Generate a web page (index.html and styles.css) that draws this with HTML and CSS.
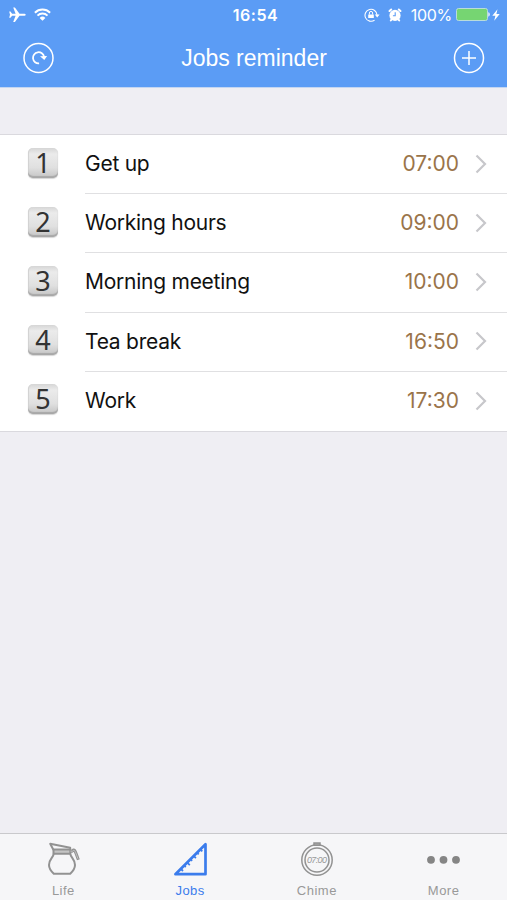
FILE: index.html
```html
<!DOCTYPE html>
<html lang="en">

<head>
    <meta charset="UTF-8">
    <meta name="viewport" content="width=device-width, initial-scale=1.0">
    <title>Jobs reminder</title>
    <link rel="stylesheet" href="styles.css">
</head>

<body>
    <header class="header">
        <div class="status-bar">
            <div class="status-left">
                <svg class="plane" width="17" height="16" viewBox="0 0 17 16">
                    <path fill="#fff" d="M16.7 7.7c0 .7-.8 1-1.7 1h-4.5L5.9 15H4.2l2.4-6.3H3.1L1.5 10.8H.2L1 7.7.2 4.6h1.3l1.6 2.1h3.5L4.2.6h1.7l4.6 6.1H15c.9 0 1.7.3 1.7 1z"/>
                </svg>
                <svg class="wifi" width="17" height="13" viewBox="0 0 17 13">
                    <g fill="none" stroke="#fff" stroke-width="2">
                        <path d="M.9 4.7a10.8 10.8 0 0 1 15.2 0"/>
                        <path d="M3.5 7.6a7 7 0 0 1 10 0"/>
                    </g>
                    <path fill="#fff" d="M8.5 12.7 5.6 9.9a4.1 4.1 0 0 1 5.8 0z"/>
                </svg>
            </div>
            <div class="clock">16:54</div>
            <div class="status-right">
                <svg class="lock" width="16" height="14" viewBox="0 0 16 14">
                    <path fill="none" stroke="#fff" stroke-width="1.1" d="M10.6 12.1A6 6 0 1 1 13 7"/>
                    <path fill="#fff" d="M10.8 6.4h4.8L13.2 9.4zM4.2 6.4h5.6V10H4.2z"/>
                    <path fill="none" stroke="#fff" d="M5.4 6.5V5a1.6 1.6 0 0 1 3.2 0v1.5"/>
                </svg>
                <svg class="alarm" width="14" height="14" viewBox="0 0 14 14">
                    <circle cx="7" cy="7.4" r="5.6" fill="#fff"/>
                    <path fill="none" stroke="#fff" stroke-width="2" stroke-linecap="round" d="M1.5 3 3.2 1.5M12.5 3l-1.7-1.5M3.3 11.8l-.5.7M10.7 11.8l.5.7"/>
                    <path fill="none" stroke="#5b9cf5" stroke-width="1.1" d="M7.2 4.3v3.5H4.9"/>
                </svg>
                <span class="percent">100%</span>
                <svg class="battery" width="34" height="13" viewBox="0 0 34 13">
                    <rect x=".5" y=".5" width="31" height="12" rx="2" fill="#76d572" stroke="#b9dcda"/>
                    <path fill="#fff" d="M32.4 4.3c1.7.6 1.7 3.8 0 4.4z"/>
                </svg>
                <svg class="bolt" width="8" height="12" viewBox="0 0 8 12">
                    <path fill="#fff" d="M5.5.3.3 6.7h3.1L2.2 11.8 7.7 5H4.4z"/>
                </svg>
            </div>
        </div>
        <nav class="nav-bar">
            <svg width="32" height="32" viewBox="0 0 32 32" fill="none" stroke="#fff">
                <circle cx="15.5" cy="16" r="14.5" stroke-width="1.5"/>
                <path stroke-width="1.8" d="M16.1 21.4a5.6 5.6 0 1 1 5-6.6"/>
                <path fill="#fff" stroke="none" d="M17 14.3 24.1 14l-2.8 4z"/>
            </svg>
            <h1>Jobs reminder</h1>
            <svg width="32" height="32" viewBox="0 0 32 32" fill="none" stroke="#fff" stroke-width="1.5">
                <circle cx="16" cy="16" r="14.5"/>
                <path d="M16 9v14M9 16h14"/>
            </svg>
        </nav>
    </header>

    <main>
        <ul class="job-list">
            <li class="job">
                <span class="key">1</span>
                <div class="job-body"><span class="name">Get up</span><span class="time">07:00</span>
                    <svg class="arrow" width="12" height="20" viewBox="0 0 12 20"><path d="m1.5 1.5 8.5 8.5-8.5 8.5"/></svg></div>
            </li>
            <li class="job">
                <span class="key">2</span>
                <div class="job-body"><span class="name">Working hours</span><span class="time">09:00</span>
                    <svg class="arrow" width="12" height="20" viewBox="0 0 12 20"><path d="m1.5 1.5 8.5 8.5-8.5 8.5"/></svg></div>
            </li>
            <li class="job">
                <span class="key">3</span>
                <div class="job-body"><span class="name">Morning meeting</span><span class="time">10:00</span>
                    <svg class="arrow" width="12" height="20" viewBox="0 0 12 20"><path d="m1.5 1.5 8.5 8.5-8.5 8.5"/></svg></div>
            </li>
            <li class="job">
                <span class="key">4</span>
                <div class="job-body"><span class="name">Tea break</span><span class="time">16:50</span>
                    <svg class="arrow" width="12" height="20" viewBox="0 0 12 20"><path d="m1.5 1.5 8.5 8.5-8.5 8.5"/></svg></div>
            </li>
            <li class="job">
                <span class="key">5</span>
                <div class="job-body"><span class="name">Work</span><span class="time">17:30</span>
                    <svg class="arrow" width="12" height="20" viewBox="0 0 12 20"><path d="m1.5 1.5 8.5 8.5-8.5 8.5"/></svg></div>
            </li>
        </ul>
    </main>

    <footer class="tab-bar">
        <div class="tab">
            <svg width="34" height="34" viewBox="0 0 34 34" fill="none" stroke="#929292" stroke-width="2" stroke-linejoin="round">
                <path fill="#c4c4c4" d="M7.5 7.5h16.8v4.2H7.5z"/>
                <path d="M7.5 8 4.2 1.8l20 4v2M7.7 11.7C7.5 15.5 3 17 3 23c0 4 2.3 6.4 4.8 8.8h16.4c2.5-2.4 4.8-4.8 4.8-8.8 0-6-4.5-7.5-4.7-11.3"/>
                <path stroke-width="3" d="M24 9.2h2.2c2.5-3.2 3 .2 6.2 8.6"/>
                <path stroke="#d5d5d6" stroke-width=".7" d="M24.5 9.2h2c2.3-2.6 2.8.8 5.5 7.6"/>
            </svg>
            <span>Life</span>
        </div>
        <div class="tab active">
            <svg width="34" height="34" viewBox="0 0 34 34" fill="none" stroke="#3b7cec" stroke-linejoin="round">
                <path stroke-width="2.7" d="M2.4 32.2 32.5 2.3v29.9z"/>
                <path stroke-width="1.8" d="m7.5 26.5 2.5 2.5m.8-5.8 2 2m1-5 3 3m.3-6.3 2 2m1.3-5.3 2.5 2.5m.8-5.8 2 2m1.3-5.3 2.3 2.3"/>
            </svg>
            <span>Jobs</span>
        </div>
        <div class="tab">
            <svg width="34" height="34" viewBox="0 0 34 34" fill="none" stroke="#929292" stroke-width="1.5">
                <circle cx="17" cy="18" r="15.2"/>
                <circle cx="17" cy="18" r="12"/>
                <path fill="#aaa" d="M14 1h6v2.2h-6z"/>
                <text class="watch-digits" x="17" y="21.3" textLength="20">07:00</text>
            </svg>
            <span>Chime</span>
        </div>
        <div class="tab">
            <svg width="34" height="34" viewBox="0 0 34 34" fill="#858585">
                <circle cx="4" cy="17.8" r="3.9"/>
                <circle cx="16.5" cy="17.8" r="3.9"/>
                <circle cx="29" cy="17.8" r="3.9"/>
            </svg>
            <span>More</span>
        </div>
    </footer>
</body>

</html>
```

FILE: styles.css
```css
* {
    box-sizing: border-box;
}

body {
    margin: 0;
    height: 900px;
    display: flex;
    flex-direction: column;
    background: #efeef3;
    font-family: Inter, "Liberation Sans", sans-serif;
    color: #111;
}

.header {
    height: 88px;
    background: #5b9cf5;
    border-bottom: 1px solid #c3d6f2;
    color: #fff;
}

.status-bar {
    display: grid;
    grid-template-columns: 1fr auto 1fr;
    align-items: center;
    height: 29px;
    padding: 0 7px 0 9px;
}

.status-left,
.status-right {
    display: flex;
    align-items: center;
}

.wifi {
    margin-left: 8px;
}

.clock {
    padding-left: 2px;
    font-size: 16px;
    font-weight: 600;
    letter-spacing: 0.5px;
}

.status-right {
    justify-content: flex-end;
}

.alarm {
    margin-left: 8px;
}

.percent {
    margin: 0 4px 0 9px;
    font-size: 16px;
    letter-spacing: -0.3px;
}

.bolt {
    margin-left: 2px;
}

.nav-bar {
    display: flex;
    justify-content: space-between;
    align-items: center;
    height: 57px;
    padding: 0 22px 0 23px;
}

.nav-bar h1 {
    margin: 0;
    padding-top: 2px;
    font: 400 23px "Liberation Sans", sans-serif;
}

main {
    flex: 1;
    padding-top: 46px;
}

.job-list {
    margin: 0;
    padding: 0;
    list-style: none;
    background: #fff;
    border-top: 1px solid #dad9de;
    border-bottom: 1px solid #dad9de;
}

.job {
    display: flex;
    align-items: center;
    height: 59.2px;
    padding-left: 28px;
}

.key {
    width: 30px;
    height: 30px;
    margin: -4px 27px 0 0;
    border-radius: 5px;
    background: linear-gradient(#d6d6d6, #ebebeb 20%, #e0e0e0 65%, #c4c4c4);
    box-shadow: inset 0 -2px 1px #a8a8a8, inset 1px 0 1px #d5d5d5, 0 1px 1px #d5d5d5;
    color: #333;
    font: 27px/30px "Noto Sans", sans-serif;
    text-align: center;
}

.job-body {
    flex: 1;
    display: flex;
    align-items: center;
    height: 100%;
    padding: 0 20px 1px 0;
    border-bottom: 1px solid #e0e0e2;
    font-size: 21px;
}

.job:last-child .job-body {
    border-bottom: 0;
}

.name {
    flex: 1;
    letter-spacing: -0.25px;
}

.time {
    color: #9a744a;
}

.arrow {
    margin-left: 16px;
    fill: none;
    stroke: #c7c7cb;
    stroke-width: 2.2;
}

.tab-bar {
    display: flex;
    height: 67px;
    background: #f6f6f8;
    border-top: 1.5px solid #c9c9cc;
}

.tab {
    flex: 1;
    display: flex;
    flex-direction: column;
    align-items: center;
    padding-top: 8px;
    color: #999;
    font: 13px/16px "Liberation Sans", sans-serif;
    letter-spacing: 0.5px;
}

.tab span {
    margin-top: 7px;
}

.tab.active {
    color: #3b7cec;
}

.watch-digits {
    fill: #999;
    stroke: none;
    font: italic 9px "Liberation Sans", sans-serif;
    letter-spacing: 0;
    text-anchor: middle;
}
```
